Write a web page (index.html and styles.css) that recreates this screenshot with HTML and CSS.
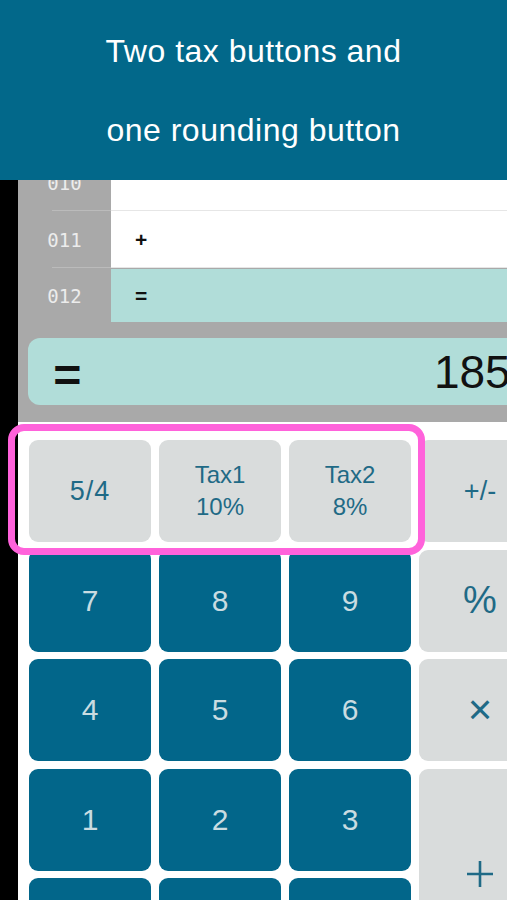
FILE: index.html
```html
<!DOCTYPE html>
<html lang="en">
<head>
<meta charset="utf-8">
<title>Tax calculator</title>
<link rel="stylesheet" href="styles.css">
</head>
<body>
<header class="banner">
  <p class="banner-line">Two tax buttons and</p>
  <p class="banner-line">one rounding button</p>
</header>
<main class="device">
  <div class="bezel"></div>
  <div class="calc">
    <section class="history">
      <div class="hist-row hist-row--partial">
        <div class="hist-inner"><span class="hist-num">010</span><span class="hist-op"></span></div>
      </div>
      <div class="hist-row">
        <div class="hist-inner"><span class="hist-num">011</span><span class="hist-op">+</span></div>
      </div>
      <div class="hist-row hist-row--active">
        <div class="hist-inner"><span class="hist-num">012</span><span class="hist-op">=</span></div>
      </div>
    </section>
    <section class="display-area">
      <div class="display">
        <span class="display-eq">=</span>
        <span class="display-num">18500</span>
      </div>
    </section>
    <section class="keypad">
      <button class="key key--fn key--round">5/4</button>
      <button class="key key--fn key--two">Tax1<br>10%</button>
      <button class="key key--fn key--two">Tax2<br>8%</button>
      <button class="key key--op key--pm">+/-</button>

      <button class="key key--num">7</button>
      <button class="key key--num">8</button>
      <button class="key key--num">9</button>
      <button class="key key--op key--pct">%</button>

      <button class="key key--num">4</button>
      <button class="key key--num">5</button>
      <button class="key key--num">6</button>
      <button class="key key--op key--mul">×</button>

      <button class="key key--num">1</button>
      <button class="key key--num">2</button>
      <button class="key key--num">3</button>
      <button class="key key--op key--plus">
        <svg width="28" height="28" viewBox="0 0 28 28"><path d="M14 1V27M1 14H27" stroke="#1f6a86" stroke-width="2.6" fill="none"/></svg>
      </button>

      <button class="key key--num">0</button>
      <button class="key key--num">00</button>
      <button class="key key--num">.</button>
    </section>
  </div>
  <div class="highlight"></div>
</main>
</body>
</html>
```
FILE: styles.css
```css
* { box-sizing: border-box; }
html, body { margin: 0; padding: 0; }
body {
  width: 507px;
  height: 900px;
  overflow: hidden;
  background: #ffffff;
  font-family: "Liberation Sans", Arial, sans-serif;
}
.banner {
  height: 180px;
  background: #02688a;
  color: #ffffff;
  padding-top: 12px;
  text-align: center;
}
.banner-line {
  margin: 0;
  font-size: 32px;
  line-height: 79px;
  letter-spacing: 0.5px;
}
.device {
  position: relative;
  display: flex;
  height: 720px;
}
.bezel {
  width: 18px;
  flex: none;
  background: #000000;
}
.calc {
  flex: 1;
  overflow: hidden;
  background: #ffffff;
}
.history {
  background: #a9a9a9;
}
.hist-row {
  position: relative;
  height: 57px;
  overflow: hidden;
  display: flex;
  align-items: flex-end;
}
.hist-row--partial { height: 31px; }
.hist-row--active { height: 53px; align-items: center; margin-top: 1px; }
.hist-row::after {
  content: "";
  position: absolute;
  left: 34px;
  right: 0;
  bottom: 0;
  height: 1px;
  background: rgba(205,205,205,0.5);
}
.hist-row--active::after { display: none; }
.hist-inner {
  display: grid;
  grid-template-columns: 93px 1fr;
  width: 100%;
  height: 57px;
  flex: none;
}
.hist-row--active .hist-inner { height: 53px; }
.hist-num {
  display: flex;
  align-items: center;
  justify-content: center;
  font-family: "DejaVu Sans Mono", monospace;
  font-size: 19px;
  color: #ececec;
  background: #a9a9a9;
}
.hist-op {
  display: flex;
  align-items: center;
  padding-left: 24px;
  background: #ffffff;
  font-size: 21px;
  font-weight: bold;
  color: #111111;
}
.hist-row--active .hist-op { background: #b1ddd9; }
.display-area {
  background: #a9a9a9;
  padding: 16px 0 17px 10px;
}
.display {
  display: flex;
  align-items: center;
  width: 600px;
  height: 67px;
  background: #b1ddd9;
  border-radius: 12px;
  padding: 0 0 0 26px;
}
.display-eq {
  font-size: 46px;
  font-weight: bold;
  color: #111111;
  line-height: 1;
  transform: translateY(3px) scaleX(1.05);
}
.display-num {
  margin-left: 353px;
  font-size: 46px;
  color: #111111;
  line-height: 1;
}
.keypad {
  display: grid;
  grid-template-columns: repeat(4, 122px);
  grid-auto-rows: 102px;
  column-gap: 8px;
  row-gap: 7.5px;
  padding: 18px 0 0 11px;
  width: 620px;
}
.key {
  border: none;
  margin: 0;
  padding: 0;
  border-radius: 9px;
  font-family: "Liberation Sans", Arial, sans-serif;
  display: flex;
  align-items: center;
  justify-content: center;
}
.key--fn, .key--op {
  background: #d9dcdc;
  color: #1f6a86;
}
.key--fn { font-size: 24px; }
.key--round { font-size: 27px; letter-spacing: 1px; }
.key--two { line-height: 32px; }
.key--num {
  background: #02668a;
  color: #c9dce1;
  font-size: 30px;
}
.key--pm { font-size: 27px; }
.key--pct { font-size: 38px; }
.key--mul { font-size: 42px; }
.key--plus { grid-row: span 2; }
.highlight {
  position: absolute;
  left: 8px;
  top: 244px;
  width: 417px;
  height: 131px;
  border: 7px solid #ff62db;
  border-radius: 16px;
}
```
